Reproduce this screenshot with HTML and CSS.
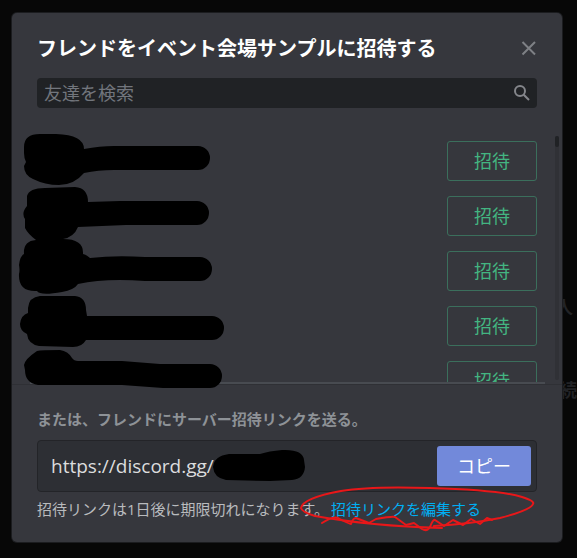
FILE: index.html
```html
<!DOCTYPE html>
<html lang="ja">
<head>
    <meta charset="UTF-8">
    <meta name="viewport" content="width=device-width, initial-scale=1.0">
    <title>フレンドを招待</title>
    <link rel="stylesheet" href="styles.css">
</head>
<body>
    <div class="behind" aria-hidden="true">
        <span class="behind-text behind-people">人</span>
        <span class="behind-text behind-next">続</span>
    </div>

    <main class="modal">
        <header class="modal-header">
            <h1>フレンドをイベント会場サンプルに招待する</h1>
            <button class="close" type="button" aria-label="閉じる">
                <svg width="16" height="16" viewBox="0 0 16 16"><path d="M1.500 1L14 13.500M14 1L1.500 13.500"/></svg>
            </button>
        </header>

        <div class="search">
            <input type="text" placeholder="友達を検索" aria-label="友達を検索">
            <svg width="18" height="18" viewBox="0 0 18 18"><circle cx="7" cy="7" r="5"/><path d="M10.700 10.700L16 16"/></svg>
        </div>

        <div class="friends">
            <ul class="friend-list">
                <li><button class="invite" type="button">招待</button></li>
                <li><button class="invite" type="button">招待</button></li>
                <li><button class="invite" type="button">招待</button></li>
                <li><button class="invite" type="button">招待</button></li>
                <li><button class="invite" type="button">招待</button></li>
            </ul>
            <div class="scrollbar"><div class="thumb"></div></div>
        </div>

        <footer class="modal-footer">
            <label for="link">または、フレンドにサーバー招待リンクを送る。</label>
            <div class="copy-box">
                <input type="text" id="link" value="https://discord.gg/" readonly>
                <button class="copy" type="button">コピー</button>
            </div>
            <p>招待リンクは1日後に期限切れになります。<a href="#">招待リンクを編集する</a></p>
        </footer>
    </main>

    <!-- ペンで描いた塗りつぶしと赤丸 -->
    <svg class="marks" width="577" height="558" viewBox="0 0 577 558" aria-hidden="true">
        <g class="ink">
            <path d="M24 147Q24 134 40 134H56Q84 135 84 149Q100 146 114 146H198A12 12 0 0 1 198 170H114Q98 170 84 173Q74 185 59 185Q45 185 33 179Q24 175 24 166L26 162Q24 158 24 153Z"/>
            <path d="M27 196Q29 188 45 188L75 187Q88 188 88 202L120 201H197A12 12 0 0 1 197 225H126L78 227Q74 237 63 239Q84 239 83 254Q87 255 90 258Q115 255 145 257H200A12 12 0 0 1 200 281H145Q105 278 78 284Q74 290 62 292Q40 296 37 291Q18 292 19 274Q20 270 19 265Q20 256 24 254Q23 241 36 240Q28 234 25 228V219Q21 213 27 206Z"/>
            <path d="M28 308Q29 297 40 296H75Q86 297 86 310L87 316H212A12 12 0 0 1 212 340H86Q82 347 73 347L39 346Q28 344 27 334Q20 331 20 324Q21 315 28 313Z"/>
            <path d="M24 365Q25 359 37 351Q41 350 60 350Q68 351 72 358Q74 361 78 361L122 361L160 364H210A12 12 0 0 1 210 388H163L122 385H38Q25 383 25 370Z"/>
            <path d="M229 454L260 454Q269 451 282 450Q303 449 304 460L305 467Q304 479 292 480L270 481L226 480Q214 478 213 467Q214 456 229 454Z"/>
        </g>
        <g class="red">
            <path d="M442 528Q370 526 315 516Q302 512 301 508Q303 498 341 491Q370 486 430 488Q500 490 522 497Q535 501 533 504Q531 510 500 518Q470 524 434 526"/>
            <path d="M322 523Q333 516 338 518Q347 523 351 524Q353 518 356 518L369 523L376 519Q393 516 395 517L406 525L414 523L422 529Q427 532 430 527Q433 519 435 520L444 526L453 520L463 525L471 519L480 524L487 518L492 520"/>
        </g>
    </svg>
</body>
</html>
```

FILE: styles.css
```css
* {
    box-sizing: border-box;
}
body {
    margin: 0;
    padding: 13px 15px 16px 12px;
    background: #070707;
    font-family: "Open Sans", "Noto Sans CJK JP", sans-serif;
    color: #b9bbbe;
}
input, button {
    font: inherit;
}

/* 背景に残る文字 */
.behind-text {
    position: absolute;
    right: 4px;
    font-size: 18px;
    line-height: 24px;
    font-weight: 700;
    color: #222326;
}
.behind-people {
    top: 295px;
}
.behind-next {
    top: 378px;
    right: 0;
}

.modal {
    position: relative;
    background: #36373d;
    border-radius: 5px;
    box-shadow: 0 0 0 1px #1b1c1f;
}
.modal-header {
    display: flex;
    justify-content: space-between;
    align-items: center;
    padding: 20px 25px 14px;
}
h1 {
    margin: 0;
    font-size: 20px;
    line-height: 31px;
    font-weight: 700;
    color: #fff;
}
.close {
    display: flex;
    padding: 0;
    border: none;
    background: none;
    cursor: pointer;
}
.close svg {
    fill: none;
    stroke: #7e8085;
    stroke-width: 2;
}

/* 検索欄 */
.search {
    display: flex;
    align-items: center;
    height: 30px;
    margin: 0 25px;
    padding: 0 6px 0 7px;
    background: #202225;
    border-radius: 4px;
}
.search input {
    flex: 1;
    min-width: 0;
    padding: 0;
    border: none;
    outline: none;
    background: none;
    font-size: 18px;
    line-height: 28px;
    color: #dcddde;
}
.search input::placeholder {
    color: #72767d;
    opacity: 1;
}
.search svg {
    fill: none;
    stroke: #84868b;
    stroke-width: 2;
}

/* フレンド一覧 */
.friends {
    display: flex;
    max-height: 277px;
    padding-top: 28px;
    border-bottom: 1px solid #2f3035;
}
.friend-list {
    flex: 1;
    margin: 0 0 0 18px;
    padding: 5px 8px 0 0;
    list-style: none;
    overflow: hidden;
    border-bottom: 2px solid #484b51;
}
.friend-list li {
    display: flex;
    justify-content: flex-end;
    margin-bottom: 15px;
}
.invite {
    width: 90px;
    height: 40px;
    padding: 0;
    background: none;
    border: 1px solid #3b6f5c;
    border-radius: 3px;
    font-size: 18px;
    line-height: 36px;
    color: #43b581;
    cursor: pointer;
}
.scrollbar {
    width: 4px;
    margin: 0 3px 4px 10px;
    background: #303136;
    border-radius: 2px;
}
.thumb {
    height: 11px;
    background: #202225;
    border-radius: 2px;
}

/* 招待リンク */
.modal-footer {
    padding: 23px 25px 22px;
    font-size: 15px;
    line-height: 22px;
}
.modal-footer label {
    display: block;
    margin-bottom: 10px;
    font-weight: 700;
    color: #8e9297;
}
.copy-box {
    display: flex;
    align-items: center;
    height: 52px;
    padding: 0 5px 0 13px;
    background: #2d2f34;
    border: 1px solid #232428;
    border-radius: 4px;
}
.copy-box input {
    flex: 1;
    min-width: 0;
    padding: 0;
    border: none;
    outline: none;
    background: none;
    font-size: 19px;
    color: #dcddde;
}
.copy {
    width: 94px;
    height: 40px;
    padding: 0;
    border: none;
    border-radius: 3px;
    background: #7289da;
    font-size: 18px;
    color: #fff;
    cursor: pointer;
}
.modal-footer p {
    margin: 6px 0 0;
}
.modal-footer a {
    margin-left: 2px;
    color: #00aff4;
    text-decoration: none;
}

.marks {
    position: absolute;
    top: 0;
    left: 0;
    pointer-events: none;
}
.ink {
    fill: #000;
}
.red {
    fill: none;
    stroke: #e81719;
    stroke-width: 2;
    stroke-linecap: round;
    stroke-linejoin: round;
}
```
